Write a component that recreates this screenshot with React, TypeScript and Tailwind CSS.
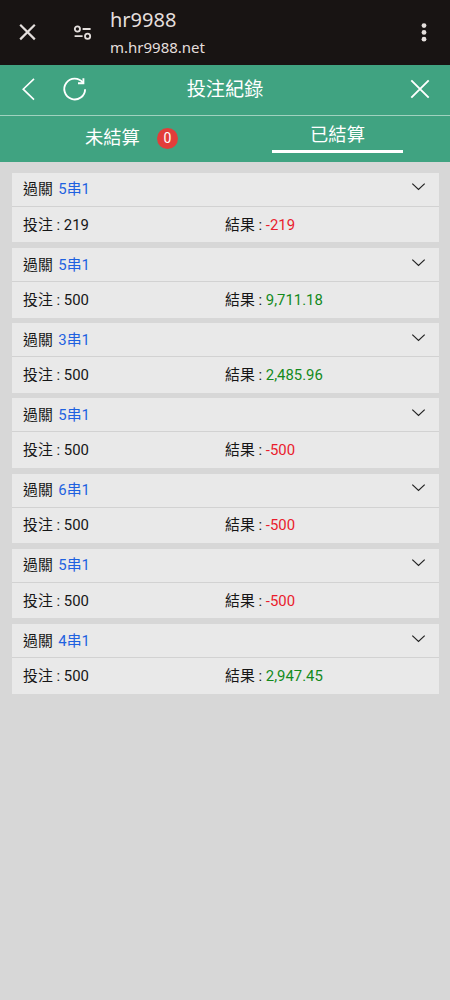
import React from 'react';

type Bet = {
  id: number;
  parlay: string;
  stake: string;
  result: string;
};

const bets: Bet[] = [
  { id: 1, parlay: '5串1', stake: '219', result: '-219' },
  { id: 2, parlay: '5串1', stake: '500', result: '9,711.18' },
  { id: 3, parlay: '3串1', stake: '500', result: '2,485.96' },
  { id: 4, parlay: '5串1', stake: '500', result: '-500' },
  { id: 5, parlay: '6串1', stake: '500', result: '-500' },
  { id: 6, parlay: '5串1', stake: '500', result: '-500' },
  { id: 7, parlay: '4串1', stake: '500', result: '2,947.45' },
];

const BrowserBar: React.FC = () => (
  <div className="flex h-[65px] items-center bg-[#181413] pl-[19px] pr-[18px] font-['Noto_Sans',sans-serif] text-[#e4dfdd]">
    <svg width="17" height="17" viewBox="0 0 17 17" fill="none" stroke="currentColor" strokeWidth="2.2">
      <path d="M1.2 0.8 15.8 15.4M15.8 0.8 1.2 15.4" />
    </svg>
    <svg className="ml-[37px]" width="20" height="16" viewBox="0 0 20 16" fill="none" stroke="currentColor" strokeWidth="1.8">
      <circle cx="4.4" cy="4" r="2.6" />
      <path d="M9.6 4H17.6M1.6 11.2H9.6" />
      <circle cx="14.6" cy="11.2" r="2.6" />
    </svg>
    <div className="ml-[17px] flex flex-1 flex-col pt-px">
      <span className="text-[20px] leading-[28px]">hr9988</span>
      <span className="text-[15px] leading-[26px]">m.hr9988.net</span>
    </div>
    <svg width="16" height="22" viewBox="0 0 16 22" fill="currentColor">
      <circle cx="8" cy="3.6" r="2.4" />
      <circle cx="8" cy="10.4" r="2.4" />
      <circle cx="8" cy="17.2" r="2.4" />
    </svg>
  </div>
);

const Header: React.FC = () => (
  <header className="flex h-[51px] items-center justify-between border-b border-[#a0d2bf] pb-[2px] pl-[20px] pr-[19px]">
    <div className="flex w-[69px] items-center gap-[24px]">
      <svg width="17" height="24" viewBox="0 0 17 24" fill="none" stroke="currentColor" strokeWidth="1.6">
        <path d="M14 1.8 3.2 12.2 14 22.6" />
      </svg>
      <svg width="26" height="26" viewBox="0 0 26 26" fill="none" stroke="currentColor" strokeWidth="1.9">
        <path d="M22 6.8A10.4 10.4 0 1 0 24.1 13.2" />
        <path d="M22.4 2.2V7.2H17" />
      </svg>
    </div>
    <h1 className="pt-[2px] text-[19.2px] leading-none">投注紀錄</h1>
    <div className="flex w-[70px] justify-end">
      <svg width="22" height="22" viewBox="0 0 22 22" fill="none" stroke="currentColor" strokeWidth="1.9">
        <path d="M2.3 2.3 19.7 19.7M19.7 2.3 2.3 19.7" />
      </svg>
    </div>
  </header>
);

const Tabs: React.FC = () => (
  <nav className="flex h-[45.5px] text-[18.3px] leading-none">
    <button type="button" className="flex w-1/2 items-center pb-px pl-[85px]">
      <span>未結算</span>
      <span className="ml-[17px] flex h-[21px] w-[21px] items-center justify-center rounded-full bg-[#e23d3a] text-[14px]">
        0
      </span>
    </button>
    <button type="button" className="flex w-1/2 justify-center">
      <span className="flex h-[37px] w-[131px] items-center justify-center border-b-[3px] border-white pt-[4px]">
        已結算
      </span>
    </button>
  </nav>
);

const BetCard: React.FC<{ bet: Bet }> = ({ bet }) => {
  const lost = bet.result.startsWith('-');

  return (
    <li className="h-[69.6px] bg-[#e9e9e9] text-[14.9px] leading-none text-[#161616]">
      <div className="flex h-[34px] items-center border-b border-[#d2d2d2] pl-[11px] pr-[13px] pt-[1px]">
        <span>過關</span>
        <span className="ml-[5.5px] flex-1 text-[#1e62e0]">{bet.parlay}</span>
        <svg className="-mt-[5px]" width="15" height="10" viewBox="0 0 15 10" fill="none" stroke="#222" strokeWidth="1.2">
          <path d="M1.3 1.6 7.5 7.4 13.7 1.6" />
        </svg>
      </div>
      <div className="flex h-[35.6px] items-center pl-[11px] pt-[1px]">
        <span className="w-[202px]">投注 : {bet.stake}</span>
        <span>
          結果 : <span className={lost ? 'text-[#ea1c2d]' : 'text-[#138a1c]'}>{bet.result}</span>
        </span>
      </div>
    </li>
  );
};

const App: React.FC = () => (
  <div className="min-h-screen bg-[#d7d7d7] font-[Roboto,'Noto_Sans_CJK_TC',sans-serif]">
    <BrowserBar />
    <div className="bg-[#40a381] text-white">
      <Header />
      <Tabs />
    </div>
    <ul className="flex flex-col gap-[5.6px] pl-[12px] pr-[11px] pt-[11.4px]">
      {bets.map((bet) => (
        <BetCard key={bet.id} bet={bet} />
      ))}
    </ul>
  </div>
);

export default App;
